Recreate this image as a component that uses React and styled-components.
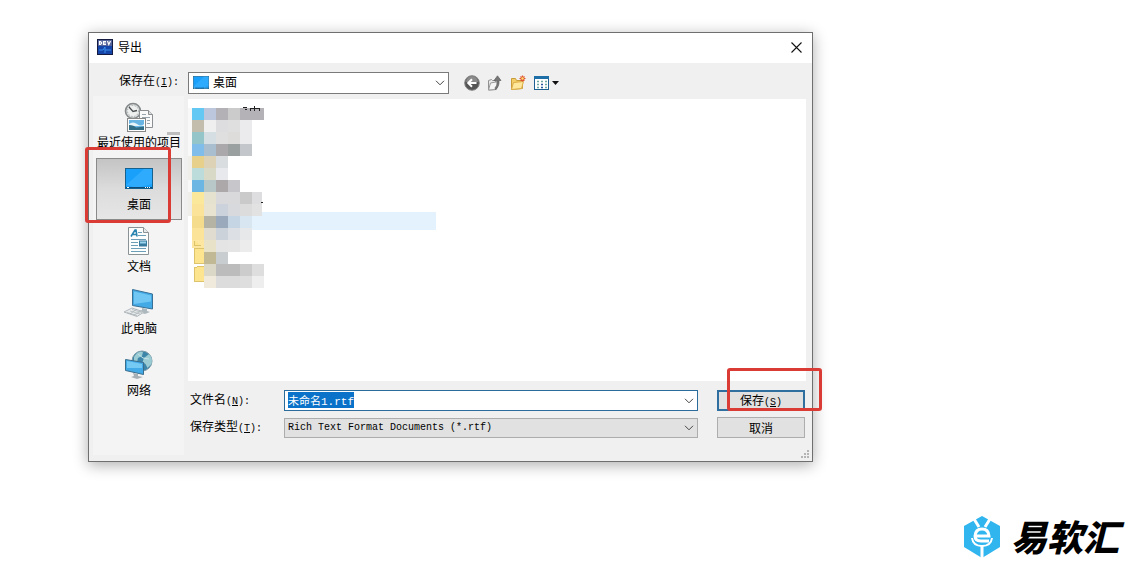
/****************************************************************************
** Export dialog
** save-as window with places bar, file list and file name form
****************************************************************************/
import React, { useEffect, useRef, useState } from 'react'
import styled, { createGlobalStyle } from 'styled-components';

const GlobalStyle = createGlobalStyle`
  body {
    margin: 0;
    background: #fff;
    color: #000;
    font-family: "Noto Sans CJK SC", "Liberation Sans", sans-serif;
    font-size: 12px;
  }
  *, *::before, *::after {
    box-sizing: border-box;
  }
  button, input, select {
    font: inherit;
    color: inherit;
  }
`;
const Page = styled.main`
  min-height: 100vh;
  display: flex;
  flex-direction: column;
  padding: 32px 0 4px;
`;
const Dialog = styled.section`
  margin: 0 316px 0 88px;
  border: 1px solid #6f6f6f;
  background: #f0f0f0;
  box-shadow: 0 3px 14px rgba(0, 0, 0, 0.32);
`;
const TitleBar = styled.header`
  display: flex;
  align-items: center;
  height: 30px;
  padding: 0 10px 2px 8px;
  background: #fff;
`;
const Title = styled.h1`
  flex: 1;
  margin: 0 0 0 5px;
  font-size: 12px;
  line-height: 18px;
  font-weight: 400;
`;
const IconButton = styled.button`
  display: flex;
  padding: 0;
  border: none;
  background: transparent;
`;
const LookRow = styled.div`
  display: flex;
  align-items: center;
  padding: 8px 6px 2px 4px;
`;
const LookLabel = styled.label`
  width: 86px;
  margin-right: 9px;
  text-align: right;
  line-height: 18px;
  padding-bottom: 2px;
`;
const Latin = styled.span`
  font-family: "Liberation Mono", monospace;
  font-size: 10px;
`;
const SelectBox = styled.div`
  position: relative;
  display: flex;
  flex: ${(props) => (props.$wide ? '1' : '0 0 261px')};
  height: ${(props) => (props.$wide ? '20px' : '22px')};
`;
const Select = styled.select`
  appearance: none;
  width: 100%;
  margin: 0;
  padding: ${(props) => (props.$icon ? '0 20px 2px 24px' : '0 20px 0 3px')};
  border: 1px solid ${(props) => (props.$icon ? '#7a7a7a' : '#adadad')};
  border-radius: 0;
  background: ${(props) => (props.$icon ? '#fff' : '#e1e1e1')};
  outline: none;
  ${(props) => !props.$icon && 'font-family: "Liberation Mono", monospace; font-size: 10px;'}
`;
const SelectIcon = styled.span`
  position: absolute;
  left: 5px;
  top: 4px;
  display: flex;
  pointer-events: none;
`;
const Arrow = styled.svg`
  position: absolute;
  right: 4px;
  top: 50%;
  transform: translateY(-50%);
  width: 10px;
  height: 6px;
  fill: none;
  stroke: #444;
  pointer-events: none;
`;
const Tools = styled.div`
  display: flex;
  align-items: center;
  gap: 7px;
  margin-left: 15px;
`;
const Body = styled.div`
  display: grid;
  grid-template-columns: 91px 1fr;
  gap: 4px;
  padding: 0 6px 6px 4px;
`;
const Places = styled.nav`
  background: #f4f4f4;
  padding: 0 2px 0 3px;
`;
const Marked = styled.div`
  position: relative;
`;
const PlaceButton = styled.button`
  display: flex;
  flex-direction: column;
  align-items: center;
  width: 100%;
  height: 62px;
  padding: 5px 0 0;
  border: 1px solid ${(props) => (props.$active ? '#8a8a8a' : 'transparent')};
  background: ${(props) => (props.$active ? 'linear-gradient(#c4c4c4, #dcdcdc 50%, #e6e6e6)' : 'transparent')};
  line-height: 16px;
  white-space: nowrap;
`;
const Main = styled.div`
  display: flex;
  flex-direction: column;
  position: relative;
  padding-top: 3px;
`;
const FileList = styled.div`
  min-height: 282px;
  padding-top: 5px;
  background: #fff;
`;
const Form = styled.form`
  display: grid;
  grid-template-columns: 96px 1fr 88px;
  column-gap: 0;
  row-gap: 6px;
  align-items: center;
  padding: 9px 1px 17px 0;
`;
const FormLabel = styled.label`
  padding-left: 2px;
  line-height: 18px;
`;
const NameBox = styled.div`
  position: relative;
  display: flex;
  height: 21px;
`;
const NameInput = styled.input`
  width: 100%;
  padding: 0 20px 2px 3px;
  border: 1px solid #2b6c9c;
  background: #fff;
  outline: none;
  font-family: "Liberation Mono", "Noto Sans CJK SC", monospace;
  font-size: 11px;
  &::selection {
    background: #0a72c8;
    color: #fff;
  }
`;
const Action = styled.button`
  width: 100%;
  height: 21px;
  padding: 0;
  border: ${(props) => (props.$primary ? '2px solid #2f6f9f' : '1px solid #adadad')};
  background: #e1e1e1;
  line-height: 16px;
`;
const FormField = styled.div`
  margin-right: 19px;
`;
const Mark = styled.span`
  position: absolute;
  border: 3px solid #db3b35;
  border-radius: 3px;
  pointer-events: none;
`;
const PlaceMark = styled(Mark)`
  left: -11px;
  top: -11px;
  width: 86px;
  height: 76px;
`;
const SaveMark = styled(Mark)`
  left: 10px;
  top: -22px;
  width: 95px;
  height: 43px;
`;
const Smudge = styled.span`
  position: absolute;
  right: 2px;
  top: 36px;
  width: 13px;
  height: 3px;
  background: #bdbdbd;
`;
const Grip = styled.svg`
  position: absolute;
  right: -4px;
  bottom: -4px;
  fill: #b4b4b4;
`;
const Brand = styled.footer`
  display: flex;
  align-items: center;
  justify-content: flex-end;
  gap: 10px;
  margin-top: auto;
  padding-right: 10px;
`;
const BrandName = styled.strong`
  padding-bottom: 4px;
  font-size: 36px;
  line-height: 38px;
  font-weight: 900;
  font-style: italic;
`;

const Chevron = () => (
    <Arrow viewBox="0 0 10 6"><path d="M1 .8l4 4 4-4" /></Arrow>
);

const DesktopIcon = ({ small }) => (
    <svg width={small ? 16 : 32} height={small ? 13 : 32} viewBox={small ? '2 4 28 21' : '0 0 32 32'} preserveAspectRatio="none">
        <rect x="2.5" y="4.500" width="27" height="20" fill="#18a0fb" stroke="#17618f" />
        <path d="M3 21L21 5h8v15L14 24z" fill="#43b5ff" opacity=".5" />
        <path d="M3 23.500h26" stroke="#0d4c78" />
        <path d="M4 23.500h2M22 23.500h1M24 23.500h1M26 23.500h1" stroke="#fff" />
    </svg>
);

const RecentIcon = () => (
    <svg width="32" height="32" viewBox="0 0 32 32">
        <circle cx="10" cy="9" r="7.500" fill="#d9dcdc" stroke="#85898a" strokeWidth="1.6" />
        <circle cx="10" cy="9" r="5.500" fill="#eef0ef" stroke="#999d9d" strokeDasharray="1 2" />
        <path d="M6 5l4 4.500 4-1" fill="none" stroke="#4d5153" strokeWidth="1.3" />
        <path d="M16.500 8.500h9l4 4v13h-13z" fill="#fafafa" stroke="#8b8f91" />
        <path d="M25.500 8.500v4h4" fill="#ddd" stroke="#8b8f91" />
        <path d="M19 12.500h4M19 15.500h8M24 18.500h3M24 21.500h3" stroke="#9aa6ad" />
        <rect x="4.500" y="16.500" width="18" height="13" fill="#fff" stroke="#888" />
        <path d="M6 18h15v10H6z" fill="#68b5e4" />
        <path d="M6 22q4-3 8 0t7 0v2H6z" fill="#e6f4fa" />
        <path d="M6 23q5 0 7 2.500l8-1V28H6z" fill="#316d85" />
    </svg>
);

const DocumentIcon = () => (
    <svg width="32" height="32" viewBox="0 0 32 32">
        <path d="M5.500 1.500h15l5 5v22h-20z" fill="#fcfdfd" stroke="#8a9295" />
        <path d="M20.500 1.500v5h5" fill="#e7ebec" stroke="#8a9295" />
        <path d="M8 10.500l4-6.500h1l1 6.500M10 8.500h3.500" fill="none" stroke="#2684ae" strokeWidth="1.6" />
        <path d="M15 6.500h4M15 9.500h8M8 13.500h15M8 16.500h7M8 19.500h7M8 22.500h15M8 25.500h15" stroke="#6c9eb7" />
        <path d="M16 14.500h8v6h-8z" fill="#397a9f" />
        <path d="M17 15.500h6v2h-6z" fill="#9bd4ef" />
    </svg>
);

const ComputerIcon = () => (
    <svg width="32" height="32" viewBox="0 0 32 32">
        <path d="M9.500 1.500l20 4.500v15l-20-3.500z" fill="#43aae6" stroke="#387096" />
        <path d="M11 3.500l17 4v6L11 16z" fill="#70c7f3" />
        <path d="M19 20l5 1v2l3 1-5 2-7-2 4-2z" fill="#adb8be" />
        <path d="M1 24l8-4 12 4-7 4.500z" fill="#e8ebed" stroke="#b1b9bd" />
        <path d="M4 24.500l10 3M7 23l10 3M9 21.500l10 3M7 26l7-5M11 27l7-4" stroke="#a7b0b5" strokeWidth=".7" />
    </svg>
);

const NetworkIcon = () => (
    <svg width="32" height="32" viewBox="0 0 32 32">
        <circle cx="19" cy="11" r="10" fill="#3e86a9" stroke="#7a9aa7" />
        <path d="M11 7q3-6 9-5l-1 4-4 2-1 4-3-1zM21 8l5-4q4 4 2.500 10l-4 4-2-4-3-2z" fill="#9bcbd3" />
        <path d="M15 4l5 4 6 1" stroke="#c3e4e9" fill="none" />
        <path d="M2.500 9.500l18 3v12l-18-4z" fill="#42aae6" stroke="#3a6d8c" />
        <path d="M4 11l15 3v4L4 18z" fill="#75caf4" />
        <path d="M10 23l5 1v2l5 1-6 2-6-2 3-1z" fill="#a5afb5" />
    </svg>
);

const AppIcon = () => (
    <svg width="16" height="16" viewBox="0 0 16 16">
        <rect x=".5" y=".5" width="15" height="15" fill="#1545a8" stroke="#161b42" />
        <path d="M1 1h14v6H1z" fill="#55659b" />
        <path d="M2.500 2.500v3h1l1-1v-1l-1-1zM9 2.500H6.500v3H9M6.500 4H9M10.500 2l1.300 3.500L13.500 2" fill="none" stroke="#fff" strokeWidth="1.200" />
        <path d="M2 11h4l2-3v6M8 11h6" stroke="#3b90ec" fill="none" />
    </svg>
);

const BackIcon = () => (
    <svg width="16" height="16" viewBox="0 0 16 16">
        <circle cx="8" cy="8" r="7.300" fill="#555" stroke="#858585" />
        <path d="M2 7a6 6 0 0 1 12 0z" fill="#8b8b8b" />
        <path d="M12.500 8H4.500M8 4.200L4.200 8 8 11.800" fill="none" stroke="#fff" strokeWidth="2" />
    </svg>
);

const UpIcon = () => (
    <svg width="16" height="16" viewBox="0 0 16 16">
        <path d="M1.500 5.500l3-1 1 1h3v9l-7 .5z" fill="#e9e9e9" stroke="#919191" />
        <path d="M3.500 8l8-1.500-2 8-8 .5z" fill="#f5f5f5" stroke="#999" />
        <path d="M8 13q2.500-2 2-7.500H7L10.500.8 14 5.500h-2q.5 6-3.500 9z" fill="#777" stroke="#555" strokeWidth=".6" />
    </svg>
);

const NewFolderIcon = () => (
    <svg width="16" height="16" viewBox="0 0 16 16">
        <path d="M1.500 3.500h4l1 2h6v8l-11 1z" fill="#f4cf69" stroke="#c99c3b" />
        <path d="M3.500 7.500l10-1-2 7-10 1z" fill="#ffe89b" stroke="#dbad48" />
        <path d="M12.500 .5v6M9.500 3.500h6M10.500 1.500l4 4M14.500 1.500l-4 4" stroke="#df5530" strokeWidth="1.200" />
        <circle cx="12.500" cy="3.500" r="1.200" fill="#ffdf75" />
    </svg>
);

const ViewIcon = () => (
    <svg width="26" height="16" viewBox="0 0 26 16">
        <rect x="1.500" y="1.500" width="14" height="13" fill="#fff" stroke="#1e5f91" />
        <path d="M1 1h15v3H1z" fill="#1e6ea8" />
        <path d="M4 6.500h2M8 6.500h2M12 6.500h2M4 9.500h2M12 9.500h2M4 12.500h2M12 12.500h2" stroke="#6fa6a1" strokeWidth="1.600" />
        <path d="M8 9.500h2M8 12.500h2" stroke="#26589b" strokeWidth="1.600" />
        <path d="M19 6h7l-3.500 4z" fill="#111" />
    </svg>
);

const CloseIcon = () => (
    <svg width="11" height="11" viewBox="0 0 11 11">
        <path d="M.5 .5l10 10M10.500 .5l-10 10" stroke="#111" strokeWidth="1.100" />
    </svg>
);

const BrandIcon = () => (
    <svg width="38" height="42" viewBox="0 0 38 42">
        <path d="M19 0l18 10v21L19 42 1 31V10z" fill="#30b5ee" />
        <path d="M11 3l5 8M27 3l-5 8M19 30v12" stroke="#fff" strokeWidth="3" fill="none" />
        <path d="M12 20h14q-.5-7-7-7t-7 7q0 5 6 5h8" fill="none" stroke="#fff" strokeWidth="3" />
        <path d="M9 22q1 8 10 8t10-8" fill="none" stroke="#fff" strokeWidth="2" />
    </svg>
);

// masked file names, one array per 12px row
const cells = [
    ['#63c8f3', '#bcc6dc', '#b3b1b5', '#cbcbcb', '#b4b2b6', '#b4b2b6'],
    ['#c3bdae', '#efefef', '#dddddf', '#dfdfdf', '#ebebed'],
    ['#94c5c8', '#d5dfe3', '#dfdfdf', '#dedcda', '#ebebed'],
    ['#80bdeb', '#a9bfcf', '#aaa8aa', '#9a9f9f', '#c3c7cb'],
    ['#e6d08a', '#ddd2b5', '#d9dde0'],
    ['#bcdcdc', '#d9d9c8', '#e7e9ec'],
    ['#6bb6e2', '#b8c7c7', '#aca8aa', '#c7c7cb'],
    ['#fbe89a', '#e6e2d0', '#d9d9dc', '#d9d9db', '#cacaca', '#dedee0'],
    ['#fbe39a', '#e8e2d0', '#ccd2dc', '#d8d9dc', '#dcdcdc', '#e2e2e2'],
    ['#f5dc8c', '#b5b3a3', '#9ba9bc', '#c5d5e4', '#d8e6f2'],
    ['#fbe39a', '#e0dcd0', '#ccd2da', '#dcdfe3', '#e6e8ea'],
    [null, '#e8e2c8', '#e4e4e4', '#e5e5e5', '#ececec'],
    [null, '#c1b896', '#c8cdd0'],
    [null, '#dcd8c8', '#bcbcbc', '#bcbcbc', '#cccccc', '#dedede'],
    [null, '#f0eadc', '#dcdcdc', '#dcdcdc', '#dedede', '#eeeeee'],
];

const MaskedFiles = () => (
    <svg width="248" height="186" viewBox="0 0 248 186" shapeRendering="crispEdges">
        <rect x="52" y="108" width="196" height="18" fill="#e3f2fd" />
        <path d="M0 4h4v48H0zM0 76h4v36H0z" fill="#f8f8f8" />
        <path d="M0 52h4v24H0zM0 88h4v24H0z" fill="#f0eee8" />
        <path d="M4 136h12v8H4z" fill="#fde7a0" />
        <path d="M6.500 136.500v5h6M6.500 144.500h10v15h-10zM6.500 163.500h2l1-1h7v15h-10z" fill="#fde58f" stroke="#dcc36c" />
        {cells.map((row, y) => row.map((fill, x) => fill && (
            <rect key={`${y}-${x}`} x={4 + x * 12} y={4 + y * 12} width={x === 5 && y > 6 && y < 9 ? 10 : 12} height="12" fill={fill} />
        )))}
        <path d="M55 3h4M57 5h2M62 4h10M66 2v5M62 4v3M71 4v3M73 98h2" stroke="#222" fill="none" />
    </svg>
);

const places = [
    { name: '最近使用的项目', icon: RecentIcon, smudged: true },
    { name: '桌面', icon: DesktopIcon, marked: true },
    { name: '文档', icon: DocumentIcon },
    { name: '此电脑', icon: ComputerIcon },
    { name: '网络', icon: NetworkIcon },
];

const App = () => {
    const nameRef = useRef(null);
    const [place, setPlace] = useState('桌面');
    const [name, setName] = useState('未命名1.rtf');

    useEffect(() => {
        nameRef.current.focus();
        nameRef.current.select();
    }, []);

    return (
        <Page>
            <GlobalStyle />
            <Dialog role="dialog" aria-labelledby="title">
                <TitleBar>
                    <AppIcon />
                    <Title id="title">导出</Title>
                    <IconButton type="button" aria-label="关闭"><CloseIcon /></IconButton>
                </TitleBar>
                <LookRow>
                    <LookLabel htmlFor="look">保存在<Latin>(<u>I</u>):</Latin></LookLabel>
                    <SelectBox>
                        <Select id="look" $icon value={place} onChange={(e) => setPlace(e.target.value)}>
                            {places.map((item) => <option key={item.name}>{item.name}</option>)}
                        </Select>
                        <SelectIcon><DesktopIcon small /></SelectIcon>
                        <Chevron />
                    </SelectBox>
                    <Tools>
                        <IconButton type="button" aria-label="后退"><BackIcon /></IconButton>
                        <IconButton type="button" aria-label="向上一级"><UpIcon /></IconButton>
                        <IconButton type="button" aria-label="新建文件夹"><NewFolderIcon /></IconButton>
                        <IconButton type="button" aria-label="查看"><ViewIcon /></IconButton>
                    </Tools>
                </LookRow>
                <Body>
                    <Places>
                        {places.map(({ name: label, icon: Icon, marked, smudged }) => (
                            <Marked key={label}>
                                <PlaceButton type="button" $active={place === label} onClick={() => setPlace(label)}>
                                    <Icon />
                                    {label}
                                </PlaceButton>
                                {smudged && <Smudge />}
                                {marked && <PlaceMark />}
                            </Marked>
                        ))}
                    </Places>
                    <Main>
                        <FileList><MaskedFiles /></FileList>
                        <Form onSubmit={(e) => e.preventDefault()}>
                            <FormLabel htmlFor="name">文件名<Latin>(<u>N</u>):</Latin></FormLabel>
                            <FormField>
                                <NameBox>
                                    <NameInput id="name" ref={nameRef} type="text" value={name} onChange={(e) => setName(e.target.value)} />
                                    <Chevron />
                                </NameBox>
                            </FormField>
                            <Marked>
                                <Action type="submit" $primary>保存<Latin>(<u>S</u>)</Latin></Action>
                                <SaveMark />
                            </Marked>
                            <FormLabel htmlFor="type">保存类型<Latin>(<u>T</u>):</Latin></FormLabel>
                            <FormField>
                                <SelectBox $wide>
                                    <Select id="type">
                                        <option>Rich Text Format Documents (*.rtf)</option>
                                    </Select>
                                    <Chevron />
                                </SelectBox>
                            </FormField>
                            <Action type="button">取消</Action>
                        </Form>
                        <Grip width="9" height="9" viewBox="0 0 9 9">
                            <path d="M6 0h2v2H6zM3 3h2v2H3zM6 3h2v2H6zM0 6h2v2H0zM3 6h2v2H3zM6 6h2v2H6z" />
                        </Grip>
                    </Main>
                </Body>
            </Dialog>
            <Brand>
                <BrandIcon />
                <BrandName>易软汇</BrandName>
            </Brand>
        </Page>
    )
}

export default App
